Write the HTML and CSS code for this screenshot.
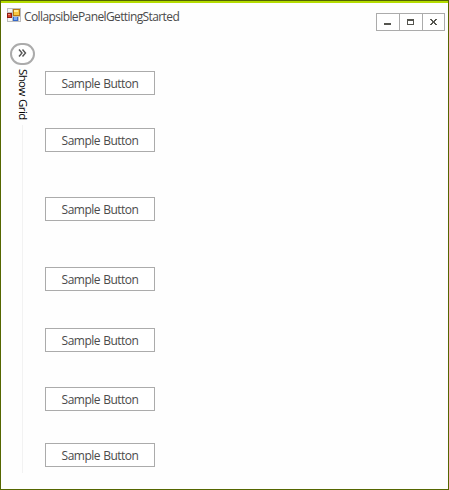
FILE: index.html
```html
<!DOCTYPE html>
<html lang="en">
<head>
<meta charset="utf-8">
<title>CollapsiblePanelGettingStarted</title>
<link rel="stylesheet" href="styles.css">
</head>
<body>
<div class="window">
  <header class="titlebar">
    <svg class="app-icon" width="14" height="14" viewBox="0 0 14 14" shape-rendering="crispEdges">
      <path fill="#bdbdbd" d="M0 0h14v14H0z"/>
      <path fill="#f4f4f4" d="M1 1h4v3H1zM1 10h4v3H1zM12 9h1v4h-1z"/>
      <path fill="#8e1a12" d="M0 5h5v5H0z"/>
      <path fill="#d8402c" d="M1 6h3v3H1z"/>
      <path fill="#f09a80" d="M1 6h2v1H1z"/>
      <path fill="#b87812" d="M6 1h7v7H6z"/>
      <path fill="#f8c840" d="M7 2h5v5H7z"/>
      <path fill="#ffe898" d="M7 2h4v2H7z"/>
      <path fill="#3568c8" d="M6 9h5v4H6z"/>
      <path fill="#79aaf5" d="M7 9h3v3H7z"/>
    </svg>
    <h1 class="title">CollapsiblePanelGettingStarted</h1>
    <div class="controls">
      <button class="control" aria-label="Minimize"><svg width="21" height="16" shape-rendering="crispEdges"><path fill="#55554f" d="M6 9h7v2H6z"/></svg></button>
      <button class="control" aria-label="Maximize"><svg width="21" height="16" shape-rendering="crispEdges"><path fill="#55554f" fill-rule="evenodd" d="M6 5h7v6H6zM7 7v3h5V7z"/></svg></button>
      <button class="control" aria-label="Close"><svg width="21" height="16" shape-rendering="crispEdges"><path fill="#55554f" d="M7 5h2v1H7zM12 5h2v1h-2zM8 6h2v1H8zM11 6h2v1h-2zM9 7h3v2H9zM8 9h2v1H8zM11 9h2v1h-2zM7 10h2v1H7zM12 10h2v1h-2z"/></svg></button>
    </div>
  </header>
  <main class="content">
    <aside class="panel">
      <button class="toggle" aria-label="Expand"><svg width="9" height="8" viewBox="0 0 9 8"><path fill="none" stroke="#555" stroke-width="1.4" d="M1 .5 4 4 1 7.5M4.5 .5 7.5 4 4.5 7.5"/></svg></button>
      <span class="panel-label">Show Grid</span>
      <div class="panel-line"></div>
    </aside>
    <div class="samples">
      <button class="sample">Sample Button</button>
      <button class="sample">Sample Button</button>
      <button class="sample">Sample Button</button>
      <button class="sample">Sample Button</button>
      <button class="sample">Sample Button</button>
      <button class="sample">Sample Button</button>
      <button class="sample">Sample Button</button>
    </div>
  </main>
</div>
</body>
</html>
```
FILE: styles.css
```css
* { box-sizing: border-box; }

body {
  margin: 0;
  font-family: "Open Sans", "Noto Sans", sans-serif;
  font-size: 12px;
  color: #4b4b4b;
}

button {
  margin: 0;
  padding: 0;
  background: #fff;
  font: inherit;
  color: inherit;
}

.window {
  width: 449px;
  height: 490px;
  background: #fefefe;
  border: 1px solid #556600;
  box-shadow: inset 0 2px #b4dc00;
  overflow: hidden;
}

.titlebar {
  display: flex;
  align-items: flex-start;
  height: 42px;
  padding: 7px 3px 0 6px;
}

.title {
  margin: 0 0 0 3px;
  font-size: 12px;
  font-weight: 400;
  line-height: 18px;
  letter-spacing: -0.61px;
  white-space: nowrap;
}

.controls {
  display: flex;
  margin: 5px 0 0 auto;
}

.control {
  width: 24px;
  height: 18px;
  border: 1px solid #ababab;
  display: flex;
  justify-content: center;
  align-items: center;
}

.control:last-child { width: 23px; }

.control + .control { margin-left: -1px; }

.content {
  display: flex;
  height: 446px;
}

.panel {
  width: 26px;
  margin-left: 9px;
  display: flex;
  flex-direction: column;
  align-items: flex-start;
  height: 430px;
}

.toggle {
  width: 25px;
  height: 22px;
  border: 2px solid #ababab;
  border-radius: 11px;
  display: flex;
  justify-content: center;
  align-items: center;
}

.toggle svg {
  margin: 0 1px 2px 0;
}

.panel-label {
  width: 17px;
  height: 56px;
  padding-top: 4px;
  margin-left: 5px;
  writing-mode: vertical-rl;
  font-size: 11.5px;
  line-height: 17px;
  letter-spacing: -0.62px;
  word-spacing: 1px;
  color: #000;
  white-space: nowrap;
}

.panel-line {
  flex: 1;
  width: 1px;
  margin-left: 12px;
  margin-top: 4px;
  background: #f2f2f2;
}

.samples {
  margin: 28px 0 0 9px;
  display: grid;
  grid-template-rows: 57px 69px 70px 61px 59px 56px 24px;
}

.sample {
  width: 110px;
  height: 24px;
  padding-top: 2px;
  border: 1px solid #ababab;
  letter-spacing: -0.5px;
  word-spacing: 0.5px;
  line-height: 20px;
}
```
